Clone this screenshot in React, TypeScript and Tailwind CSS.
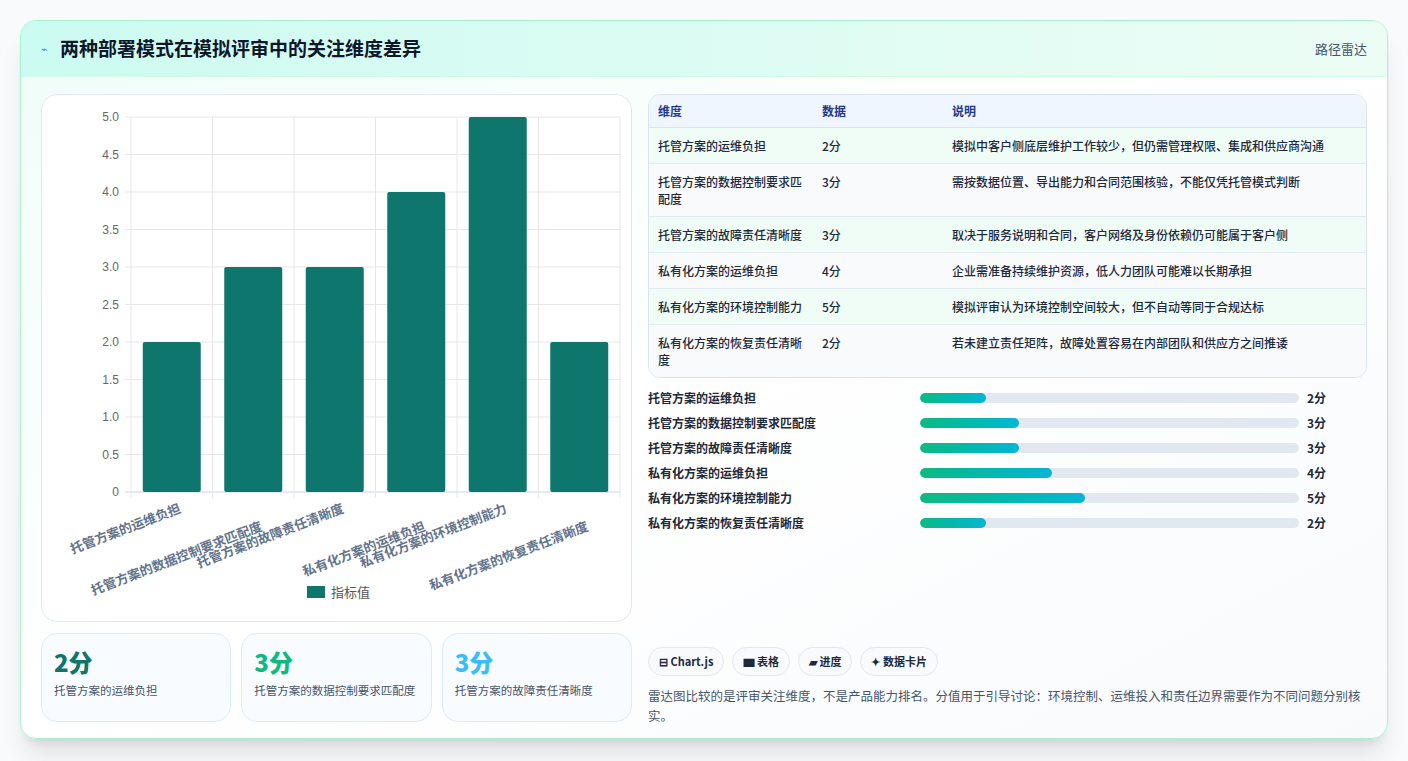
import React from "react";

const rows = [
  { name: "托管方案的运维负担", v: 2, note: "模拟中客户侧底层维护工作较少，但仍需管理权限、集成和供应商沟通" },
  { name: "托管方案的数据控制要求匹配度", v: 3, note: "需按数据位置、导出能力和合同范围核验，不能仅凭托管模式判断" },
  { name: "托管方案的故障责任清晰度", v: 3, note: "取决于服务说明和合同，客户网络及身份依赖仍可能属于客户侧" },
  { name: "私有化方案的运维负担", v: 4, note: "企业需准备持续维护资源，低人力团队可能难以长期承担" },
  { name: "私有化方案的环境控制能力", v: 5, note: "模拟评审认为环境控制空间较大，但不自动等同于合规达标" },
  { name: "私有化方案的恢复责任清晰度", v: 2, note: "若未建立责任矩阵，故障处置容易在内部团队和供应方之间推诿" },
];

const font = { fontFamily: '"Noto Sans CJK SC", "Noto Sans", sans-serif' };

function BarChart() {
  const left = 89, right = 578, top = 22, bottom = 397;
  const cw = (right - left) / 6;
  const yTicks = [0, 0.5, 1, 1.5, 2, 2.5, 3, 3.5, 4, 4.5, 5];
  const y = (v: number) => bottom - (v / 5) * (bottom - top);
  return (
    <svg width="590" height="527" className="block">
      {yTicks.map((t) => (
        <g key={t}>
          <line x1={left - 6} x2={right} y1={y(t)} y2={y(t)} stroke={t === 0 ? "#cbd5e1" : "#e5e7eb"} />
          <text x={left - 12} y={y(t) + 4} textAnchor="end" fontSize="12" fill="#666" fontFamily="Liberation Sans, sans-serif">
            {t === 0 ? "0" : t.toFixed(1)}
          </text>
        </g>
      ))}
      {Array.from({ length: 7 }).map((_, i) => (
        <line key={i} x1={left + i * cw} x2={left + i * cw} y1={top} y2={bottom + 6} stroke="#e5e7eb" />
      ))}
      {rows.map((r, i) => {
        const cx = left + cw * i + cw / 2;
        return (
          <g key={r.name}>
            <rect x={cx - 29} y={y(r.v)} width="58" height={bottom - y(r.v)} rx="2" fill="#0f766e" />
            <text
              x={cx + 10}
              y={bottom + 20 + (i % 2) * 18}
              textAnchor="end"
              fontSize="13"
              fontWeight="700"
              fill="#64748b"
              transform={`rotate(-21 ${cx + 10} ${bottom + 20 + (i % 2) * 18})`}
              style={font}
            >
              {r.name}
            </text>
          </g>
        );
      })}
      <rect x="265" y="491" width="18" height="12" fill="#0f766e" />
      <text x="289" y="502" fontSize="13" fill="#555" style={font}>指标值</text>
    </svg>
  );
}

export default function App() {
  const cards = [
    { v: "2分", c: "text-[#0f766e]", t: "托管方案的运维负担" },
    { v: "3分", c: "text-[#10b981]", t: "托管方案的数据控制要求匹配度" },
    { v: "3分", c: "text-[#38bdf8]", t: "托管方案的故障责任清晰度" },
  ];
  return (
    <div className="w-[1408px] h-[761px] bg-[#f8fafc] p-5" style={font}>
      <div className="w-full h-[719px] rounded-2xl border border-[#a7f3d0] bg-gradient-to-br from-[#f0fdf9] via-white to-[#f8fafc] shadow-xl overflow-hidden flex flex-col">
        <div className="h-[56px] shrink-0 bg-gradient-to-r from-[#ccfbf1] to-[#ecfdf5] border-b border-[#d1fae5] flex items-center justify-between px-5">
          <div className="flex items-center gap-3">
            <span className="text-[#3b82f6] text-[11px]">⌁</span>
            <h1 className="text-[19px] font-bold text-[#0f172a]">两种部署模式在模拟评审中的关注维度差异</h1>
          </div>
          <span className="text-[13px] text-[#475569]">路径雷达</span>
        </div>
        <div className="flex gap-4 px-5 pt-[17px]">
          <div className="w-[591px] shrink-0 flex flex-col gap-[11px]">
            <div className="h-[528px] rounded-2xl border border-[#e2e8f0] bg-white">
              <BarChart />
            </div>
            <div className="grid grid-cols-3 gap-[10px]">
              {cards.map((c) => (
                <div key={c.t} className="h-[89px] rounded-2xl border border-[#dbeafe] bg-[#f8fbff] px-3 pt-3">
                  <div className={`text-[24px] leading-8 font-extrabold ${c.c}`}>{c.v}</div>
                  <div className="text-[11.5px] leading-[16px] text-[#475569] mt-1">{c.t}</div>
                </div>
              ))}
            </div>
          </div>
          <div className="flex-1 flex flex-col">
            <div className="rounded-xl border border-[#dbe3ee] overflow-hidden text-[12px] text-[#1e293b]">
              <div className="flex h-[33px] items-center bg-[#eff6ff] border-b border-[#dbe3ee] font-semibold text-[#1e3a8a]">
                <div className="w-[173px] pl-[9px]">维度</div>
                <div className="w-[130px]">数据</div>
                <div className="flex-1">说明</div>
              </div>
              {rows.map((r, i) => (
                <div
                  key={r.name}
                  className={`flex py-[9px] leading-[17px] border-b border-[#e2e8f0] last:border-b-0 ${i % 2 === 0 ? "bg-[#f0fdf6]" : "bg-[#f8fafc]"}`}
                >
                  <div className="w-[173px] pl-[9px] pr-3 font-medium">{r.name}</div>
                  <div className="w-[130px] font-medium">{r.v}分</div>
                  <div className="flex-1 font-medium">{r.note}</div>
                </div>
              ))}
            </div>
            <div className="mt-[11px] flex flex-col gap-[7px]">
              {rows.map((r) => (
                <div key={r.name} className="flex items-center h-[18px] text-[12px] font-semibold text-[#1e293b]">
                  <div className="w-[272px]">{r.name}</div>
                  <div className="w-[379px] h-[10px] rounded-full bg-[#e2e8f0] overflow-hidden">
                    <div className="h-full rounded-full bg-gradient-to-r from-[#10b981] to-[#06b6d4]" style={{ width: `${r.v * 8.7}%` }} />
                  </div>
                  <div className="ml-2 font-bold">{r.v}分</div>
                </div>
              ))}
            </div>
            <div className="mt-[115px] flex gap-2">
              {["⊟ Chart.js", "▆ 表格", "▰ 进度", "✦ 数据卡片"].map((t) => (
                <span key={t} className="h-[29px] px-[10px] flex items-center rounded-full border border-[#e2e8f0] bg-[#f8fafc] text-[11px] font-semibold text-[#1e293b]">
                  {t}
                </span>
              ))}
            </div>
            <p className="mt-[10px] text-[12.5px] leading-[20px] text-[#475569]">
              雷达图比较的是评审关注维度，不是产品能力排名。分值用于引导讨论：环境控制、运维投入和责任边界需要作为不同问题分别核实。
            </p>
          </div>
        </div>
      </div>
    </div>
  );
}
